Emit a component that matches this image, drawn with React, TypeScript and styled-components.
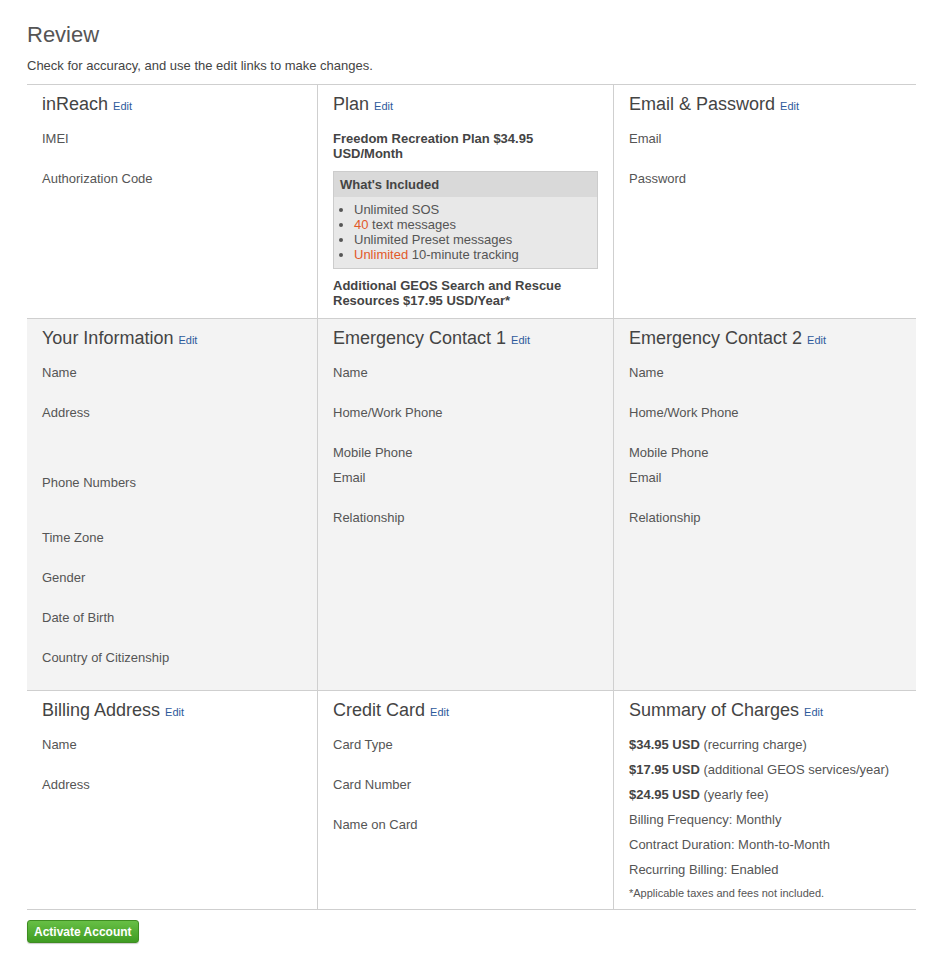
import React from "react";
import styled, { createGlobalStyle } from "styled-components";

const GlobalStyle = createGlobalStyle`
    body {
        margin: 0;
        background: #ffffff;
        font-family: "Liberation Sans", Arial, sans-serif;
        color: #555555;
    }
    * {
        box-sizing: border-box;
    }
`;

const Page = styled.div`
    width: 943px;
    padding: 22px 27px 20px;
`;

const PageTitle = styled.h1`
    margin: 0;
    font-size: 22px;
    line-height: 26px;
    font-weight: 400;
    color: #555555;
`;

const Intro = styled.p`
    margin: 9px 0 9px;
    font-size: 13px;
    line-height: 18px;
    color: #444444;
`;

const Row = styled.div<{ $shaded?: boolean; $last?: boolean }>`
    display: grid;
    grid-template-columns: 290px 296px 303px;
    border-top: 1px solid #cfcfcf;
    border-bottom: ${(p) => (p.$last ? "1px solid #cfcfcf" : "none")};
    background: ${(p) => (p.$shaded ? "#f3f3f3" : "#ffffff")};
`;

const Column = styled.div<{ $first?: boolean }>`
    display: flex;
    flex-direction: column;
    padding: 8px 15px 2px;
    border-left: ${(p) => (p.$first ? "none" : "1px solid #cfcfcf")};
`;

const SectionTitle = styled.h2`
    margin: 0 0 12px;
    font-size: 18px;
    line-height: 22px;
    font-weight: 400;
    color: #444444;
`;

const EditLink = styled.a`
    font-size: 11px;
    color: #2d5a9c;
    text-decoration: none;
    cursor: pointer;
`;

const Field = styled.div`
    display: flex;
    flex-direction: column;
`;

const Label = styled.div`
    font-size: 13px;
    line-height: 20px;
    color: #555555;
`;

const Value = styled.div<{ $h?: number }>`
    height: ${(p) => p.$h ?? 20}px;
`;

const PlanText = styled.div<{ $top?: number; $bottom?: number }>`
    margin: ${(p) => p.$top ?? 0}px 0 ${(p) => p.$bottom ?? 0}px;
    font-size: 13px;
    line-height: 15px;
    font-weight: 700;
    color: #444444;
`;

const IncludedBox = styled.div`
    margin-top: 10px;
    border: 1px solid #cccccc;
    background: #e8e8e8;
`;

const IncludedHeader = styled.div`
    height: 25px;
    padding: 0 6px;
    display: flex;
    align-items: center;
    background: #d9d9d9;
    font-size: 13px;
    font-weight: 700;
    color: #444444;
`;

const IncludedList = styled.ul`
    margin: 0;
    padding: 5px 0 6px 20px;
    font-size: 13px;
    line-height: 15px;
    color: #555555;
`;

const Accent = styled.span`
    color: #e2592a;
`;

const SummaryLine = styled.div`
    margin-bottom: 5px;
    font-size: 13px;
    line-height: 20px;
    color: #555555;
    b {
        color: #444444;
    }
`;

const Footnote = styled.div`
    margin-bottom: 6px;
    font-size: 11px;
    line-height: 16px;
    color: #555555;
`;

const ActivateButton = styled.button`
    margin-top: 10px;
    height: 23px;
    padding: 0 6px;
    border: 1px solid #3f8d22;
    border-radius: 3px;
    background: linear-gradient(#67bf45, #3f9c22);
    color: #ffffff;
    font-family: "Liberation Sans", Arial, sans-serif;
    font-size: 12px;
    font-weight: 700;
    cursor: pointer;
    box-shadow: 0 1px 1px rgba(0, 0, 0, 0.2);
`;

const Title = ({ children }: { children: React.ReactNode }) => (
    <SectionTitle>
        {children} <EditLink>Edit</EditLink>
    </SectionTitle>
);

const Item = ({ label, h }: { label: string; h?: number }) => (
    <Field>
        <Label>{label}</Label>
        <Value $h={h} />
    </Field>
);

const App = () => {
    return (
        <Page>
            <GlobalStyle />
            <PageTitle>Review</PageTitle>
            <Intro>Check for accuracy, and use the edit links to make changes.</Intro>

            <Row>
                <Column $first>
                    <Title>inReach</Title>
                    <Item label="IMEI" />
                    <Item label="Authorization Code" />
                </Column>
                <Column>
                    <Title>Plan</Title>
                    <PlanText $top={2}>
                        Freedom Recreation Plan $34.95
                        <br />
                        USD/Month
                    </PlanText>
                    <IncludedBox>
                        <IncludedHeader>What's Included</IncludedHeader>
                        <IncludedList>
                            <li>Unlimited SOS</li>
                            <li>
                                <Accent>40</Accent> text messages
                            </li>
                            <li>Unlimited Preset messages</li>
                            <li>
                                <Accent>Unlimited</Accent> 10-minute tracking
                            </li>
                        </IncludedList>
                    </IncludedBox>
                    <PlanText $top={9} $bottom={8}>
                        Additional GEOS Search and Rescue
                        <br />
                        Resources $17.95 USD/Year*
                    </PlanText>
                </Column>
                <Column>
                    <Title>Email &amp; Password</Title>
                    <Item label="Email" />
                    <Item label="Password" />
                </Column>
            </Row>

            <Row $shaded>
                <Column $first>
                    <Title>Your Information</Title>
                    <Item label="Name" />
                    <Item label="Address" h={50} />
                    <Item label="Phone Numbers" h={35} />
                    <Item label="Time Zone" />
                    <Item label="Gender" />
                    <Item label="Date of Birth" />
                    <Item label="Country of Citizenship" />
                </Column>
                <Column>
                    <Title>Emergency Contact 1</Title>
                    <Item label="Name" />
                    <Item label="Home/Work Phone" />
                    <Item label="Mobile Phone" h={5} />
                    <Item label="Email" />
                    <Item label="Relationship" />
                </Column>
                <Column>
                    <Title>Emergency Contact 2</Title>
                    <Item label="Name" />
                    <Item label="Home/Work Phone" />
                    <Item label="Mobile Phone" h={5} />
                    <Item label="Email" />
                    <Item label="Relationship" />
                </Column>
            </Row>

            <Row $last>
                <Column $first>
                    <Title>Billing Address</Title>
                    <Item label="Name" />
                    <Item label="Address" />
                </Column>
                <Column>
                    <Title>Credit Card</Title>
                    <Item label="Card Type" />
                    <Item label="Card Number" />
                    <Item label="Name on Card" />
                </Column>
                <Column>
                    <Title>Summary of Charges</Title>
                    <SummaryLine>
                        <b>$34.95 USD</b> (recurring charge)
                    </SummaryLine>
                    <SummaryLine>
                        <b>$17.95 USD</b> (additional GEOS services/year)
                    </SummaryLine>
                    <SummaryLine>
                        <b>$24.95 USD</b> (yearly fee)
                    </SummaryLine>
                    <SummaryLine>Billing Frequency: Monthly</SummaryLine>
                    <SummaryLine>Contract Duration: Month-to-Month</SummaryLine>
                    <SummaryLine>Recurring Billing: Enabled</SummaryLine>
                    <Footnote>*Applicable taxes and fees not included.</Footnote>
                </Column>
            </Row>

            <ActivateButton>Activate Account</ActivateButton>
        </Page>
    );
};

export default App;
